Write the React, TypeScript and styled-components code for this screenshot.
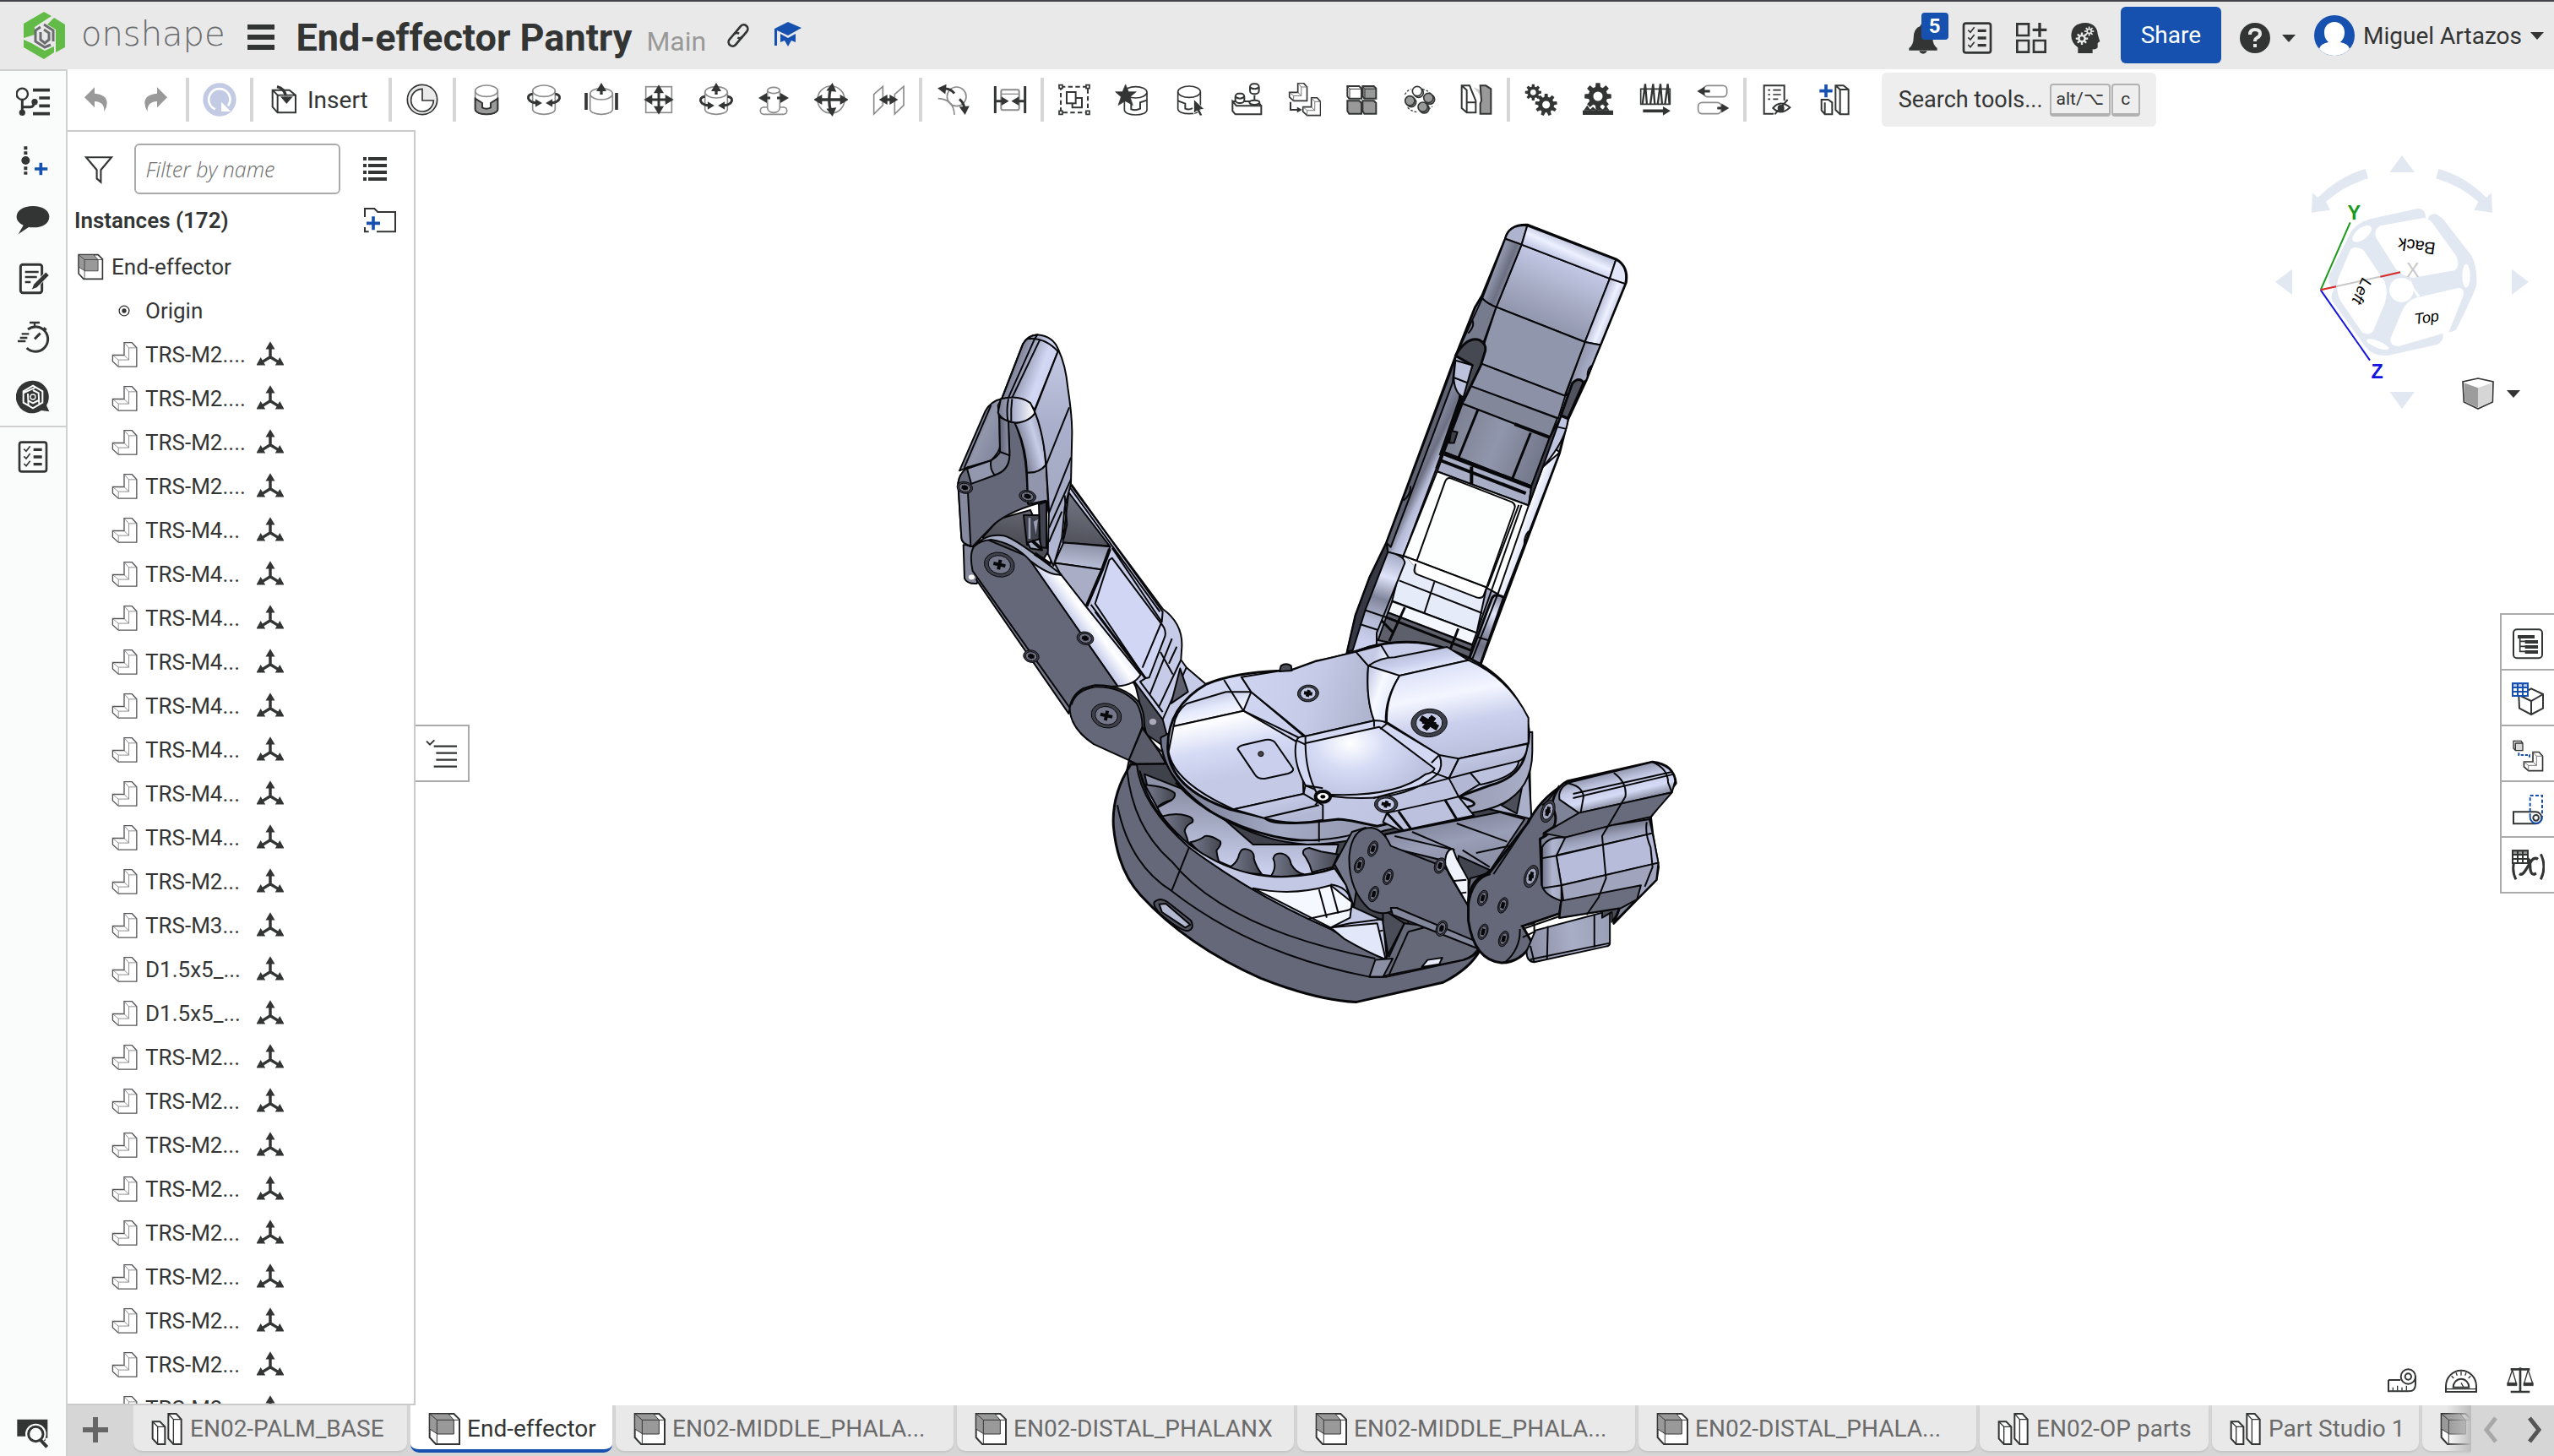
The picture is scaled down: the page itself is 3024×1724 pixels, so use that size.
import React from "react";
import styled, { createGlobalStyle } from "styled-components";

const ink = "#333534";
const mute = "#8c8c8c";
const blue = "#1651b0";
const line = "#d0d0d0";

const Global = createGlobalStyle`
  * { box-sizing: border-box; }
  html, body { margin: 0; }
  body { font-family: Roboto, "Liberation Sans", sans-serif; color: ${ink}; background: #fff; overflow: hidden; }
  button { font: inherit; color: inherit; border: 0; background: none; padding: 0; cursor: pointer; }
  svg { display: block; }
`;

/* ---------- layout ---------- */
const Page = styled.div`
  height: 100vh; display: flex; flex-direction: column; border-top: 2px solid #444347;
`;
const Header = styled.header`
  display: flex; align-items: center; justify-content: space-between; height: 80px; flex: none;
  background: #e9e9e9; padding: 0 12px 0 28px;
`;
const HeaderSide = styled.div<{ $gap: number }>`
  display: flex; align-items: center; gap: ${(p) => p.$gap}px;
`;
const Brand = styled.a`
  display: flex; align-items: center; gap: 18px; color: #6b6c6e; text-decoration: none;
  font: 200 40px/48px "DejaVu Sans", sans-serif;
`;
const BrandName = styled.span`padding-bottom: 4px;`;
const TitleRow = styled.div`
  display: flex; align-items: baseline; gap: 17px; padding-top: 6px;
`;
const Title = styled.h1`margin: 0; font-size: 45px; line-height: 52px; font-weight: 700;`;
const Branch = styled.span`font-size: 32px; color: #999;`;
const DocLinks = styled.div`display: flex; align-items: center; gap: 22px; margin-left: -7px;`;
const IconButton = styled.button<{ $w?: number }>`
  width: ${(p) => p.$w ?? 40}px; height: 40px; flex: none; display: flex; align-items: center; justify-content: center;
  position: relative;
`;
const Badge = styled.span`
  position: absolute; left: 18px; top: -10px; width: 32px; height: 32px; border-radius: 4px; background: ${blue};
  color: #fff; font-size: 24px; line-height: 32px; font-weight: 700; text-align: center;
`;
const StatusIcons = styled.div`display: flex; align-items: center; gap: 24px; padding-top: 6px;`;
const Share = styled.button`
  height: 67px; padding: 0 24px; border-radius: 6px; background: ${blue}; color: #fff; font-size: 28px; margin-top: -2px;
`;
const User = styled.button`display: flex; align-items: center; gap: 10px; font-size: 28px;`;
const Caret = styled.span`
  border: 8px solid transparent; border-top: 9px solid ${ink}; border-bottom: 0; flex: none;
`;
const HelpButton = styled.button`display: flex; align-items: center; gap: 14px; padding-top: 6px;`;

const Body = styled.div`flex: 1; min-height: 0; display: flex;`;
const Rail = styled.nav`
  width: 80px; flex: none; border-right: 2px solid ${line}; border-top: 2px solid ${line}; background: #fafcfb;
  display: flex; flex-direction: column; align-items: center; gap: 30px; padding: 16px 0 8px;
`;
const RailRule = styled.hr`width: 100%; height: 2px; border: 0; margin: -16px 0 -15px; background: ${line};`;
const RailSpace = styled.div`flex: 1;`;
const Main = styled.main`flex: 1; min-width: 0; display: flex; flex-direction: column;`;
const Toolbar = styled.div`
  height: 72px; flex: none; display: flex; align-items: center; padding-left: 14px;
`;
const ToolGroup = styled.div<{ $gap?: number }>`display: flex; align-items: center; gap: ${(p) => p.$gap ?? 28}px;`;
const Divider = styled.span`width: 4px; height: 52px; background: #d6d6d6; margin: 0 16px; flex: none;`;
const InsertButton = styled.button`
  display: flex; align-items: center; gap: 8px; padding-right: 8px; font-size: 28px;
`;
const SearchTools = styled.button`
  height: 64px; margin-left: 36px; padding: 0 19px 0 20px; border-radius: 6px; background: #eee;
  display: flex; align-items: center; font-size: 27px; gap: 8px;
`;
const Keys = styled.span`display: flex; gap: 1px;`;
const Key = styled.kbd`
  font: 21px/33px Roboto, "DejaVu Sans", sans-serif; height: 39px; padding: 0 6px; min-width: 34px; text-align: center;
  border: 2px solid #b2b2b2; border-bottom-width: 4px; border-radius: 4px;
`;
const Work = styled.div`flex: 1; min-height: 0; display: flex; position: relative;`;
const Panel = styled.aside`
  width: 412px; flex: none; border: 2px solid #cacaca; border-left: 0; overflow: hidden; display: flex; flex-direction: column;
`;
const FilterRow = styled.div`
  display: flex; align-items: center; justify-content: space-between; padding: 14px 26px 0 17px; flex: none;
`;
const FilterInput = styled.input`
  width: 244px; height: 60px; border: 2px solid #aaa; border-radius: 6px; padding: 0 12px;
  font: italic 300 25px/32px "Open Sans", sans-serif; color: ${ink};
  &::placeholder { color: #6d6d6d; opacity: 1; }
`;
const InstancesRow = styled.div`
  display: flex; align-items: center; justify-content: space-between; padding: 2px 20px 0 8px; height: 60px; flex: none;
`;
const InstancesTitle = styled.h2`margin: 0; font-size: 26px; font-weight: 600; line-height: 32px;`;
const Tree = styled.ul`list-style: none; margin: 0; padding: 0;`;
const TreeRow = styled.li<{ $indent: number }>`
  height: 52px; display: flex; align-items: center; gap: 9px; padding-left: ${(p) => p.$indent}px; font-size: 26px;
`;
const PartName = styled.span`width: 123px; white-space: nowrap;`;

const Canvas = styled.section`flex: 1; min-width: 0; position: relative; overflow: hidden;`;
const Model = styled.svg`position: absolute; left: 628px; top: 96px;`;
const CubeArea = styled.div`position: absolute; right: 0; top: 6px;`;
const ViewMenu = styled.button`
  position: absolute; right: 40px; top: 290px; height: 44px; display: flex; align-items: center; gap: 14px;
`;
const Flyout = styled.button`
  position: absolute; left: -2px; top: 704px; width: 66px; height: 68px; border: 2px solid #aaa; border-left-color: #fff; background: #fff;
  display: flex; align-items: center; justify-content: center; padding-top: 2px;
`;
const SideTools = styled.div`
  position: absolute; right: 0; top: 572px; width: 64px; border: 2px solid #aaa; border-right: 0; background: #fff;
  display: flex; flex-direction: column;
`;
const SideTool = styled.button`
  height: 66px; display: flex; align-items: center; justify-content: center; border-bottom: 2px solid #aaa;
  padding-top: 4px;
  &:last-child { border-bottom: 0; height: 64px; }
`;
const Measure = styled.div`position: absolute; right: 20px; bottom: 10px; display: flex; gap: 30px;`;

const TabBar = styled.nav`
  height: 60px; flex: none; display: flex; align-items: flex-start; background: #d6d6d6; overflow: hidden;
`;
const TabStrip = styled.div`flex: 1; min-width: 0; display: flex; gap: 4px; overflow: hidden; height: 60px; position: relative;`;
const AddTab = styled.button`width: 78px; height: 58px; flex: none; display: flex; align-items: center; justify-content: center; padding-right: 12px;`;
const Tab = styled.button<{ $active?: boolean; $w: number }>`
  width: ${(p) => p.$w}px; flex: none; height: ${(p) => (p.$active ? 56 : 54)}px; display: flex; align-items: center; gap: 7px;
  padding: ${(p) => (p.$active ? 4 : 2)}px 12px 0 20px; border-radius: 0 0 10px 10px; font-size: 28px; white-space: nowrap;
  text-align: left; line-height: 34px;
  color: ${(p) => (p.$active ? ink : "#6b6b6b")}; background: ${(p) => (p.$active ? "#fff" : "#e9e9e9")};
  box-shadow: ${(p) => (p.$active ? "none" : "0 2px 2px #c6c6c6")};
  border-bottom: ${(p) => (p.$active ? `4px solid ${blue}` : "0")};
`;
const Fade = styled.span`
  position: absolute; right: 0; top: 0; width: 30px; height: 54px; background: linear-gradient(90deg, transparent, #bdbdbd);
`;
const TabNav = styled.div`width: 98px; height: 58px; display: flex; align-items: center; justify-content: space-between; padding: 0 14px;`;

/* ---------- icon helpers (units are a third of a pixel) ---------- */
const Glyph = ({ children, s = 40 }: { children: React.ReactNode; s?: number }) => (
  <svg width={s} height={s} viewBox="-60 -60 120 120" fill="none" stroke={ink} strokeWidth="6" aria-hidden="true">{children}</svg>
);
const Head = ({ x, y, r = 0, k = 1 }: { x: number; y: number; r?: number; k?: number }) => (
  <path transform={`translate(${x} ${y}) rotate(${r}) scale(${k})`} d="M0 -22L18 8H-18Z" fill={ink} stroke="none" />
);
const Cyl = ({ t = -31, b = 34, w = 40, c = mute }: { t?: number; b?: number; w?: number; c?: string }) => (
  <g stroke={c} strokeWidth="5" fill="#fff">
    <path d={`M${-w} ${t}V${b}C${-w} ${b + 24} ${w} ${b + 24} ${w} ${b}V${t}`} />
    <ellipse cx="0" cy={t} rx={w} ry={w / 2} />
  </g>
);
const gearPath = (teeth: number, r: number, h: number) => {
  const pts: string[] = [];
  for (let i = 0; i < teeth; i++) {
    [[-0.34, r], [-0.2, r + h], [0.2, r + h], [0.34, r]].forEach(([o, q]) => {
      const a = ((i + o) / teeth) * Math.PI * 2;
      pts.push(`${(Math.sin(a) * q).toFixed(1)} ${(-Math.cos(a) * q).toFixed(1)}`);
    });
  }
  return `M${pts.join("L")}Z`;
};
const Gear = ({ x, y, r, n = 8 }: { x: number; y: number; r: number; n?: number }) => (
  <g transform={`translate(${x} ${y})`} stroke="none">
    <path d={`${gearPath(n, r * 0.74, r * 0.3)}M${r * 0.36} 0A${r * 0.36} ${r * 0.36} 0 1 0 ${-r * 0.36} 0A${r * 0.36} ${r * 0.36} 0 1 0 ${r * 0.36} 0Z`} fill={ink} fillRule="evenodd" />
  </g>
);
const SpinArrows = ({ dy = 0 }: { dy?: number }) => (
  <g transform={`translate(0 ${dy})`}>
    <path d="M-40 -20Q-58 -18 -55 -4Q-50 10 -24 12M40 -20Q58 -18 55 -4Q50 10 24 12" strokeWidth="9" />
    <Head x={-24} y={12} r={90} k={0.8} /><Head x={24} y={12} r={-90} k={0.8} />
  </g>
);
const Ell = ({ x, y, k, f = "#fff" }: { x: number; y: number; k: number; f?: string }) => (
  <g transform={`translate(${x} ${y}) scale(${k})`} strokeWidth={5 / k}>
    <path d="M0 -48L30 -48L48 -28V44H-22L-44 24V0H0Z" fill={f} />
    <path d="M0 -48L18 -28V18H-22L-44 0M18 -28H48M0 0L18 18M-22 18V44" strokeWidth={3 / k} stroke="#777" />
  </g>
);
const DarkCube = ({ s = 40 }: { s?: number }) => (
  <Glyph s={s}>
    <path d="M-52 -54H34L54 -34V54H-30L-52 30Z" fill="#fff" />
    <path d="M-52 -54H14L34 -32V18H-24L-52 0Z" fill="#999" strokeWidth="3" />
    <path d="M-52 -54L-26 -32H34M-26 -32V18M-26 18V54M34 -32H54" strokeWidth="3" />
  </Glyph>
);
const StudioIcon = () => (
  <Glyph>
    <path d="M-52 -26H-26L-8 -8V54H-34L-52 34ZM4 -54H32L50 -34V54H22L4 34Z" fill="#fff" />
    <path d="M-52 -26L-34 -8V54M-34 -8H-8M4 -54L22 -34V54M22 -34H50" strokeWidth="4" />
  </Glyph>
);
const PartIcon = () => <Glyph s={32}><g stroke="#55565a"><Ell x={0} y={2} k={1.16} /></g></Glyph>;
const MateIcon = () => (
  <Glyph s={32}>
    <path d="M0 -40V10L-42 36M0 10L42 36" strokeWidth="13" />
    <Head x={0} y={-34} k={1.15} /><Head x={-40} y={34} r={-120} k={1.15} /><Head x={40} y={34} r={120} k={1.15} />
  </Glyph>
);
const Checklist = () => (
  <Glyph>
    <rect x="-48" y="-52" width="96" height="104" rx="8" strokeWidth="8" />
    <path d="M2 -26H32M2 0H32M2 26H32" strokeWidth="10" />
    <path d="M-32 -28L-24 -20L-10 -38M-32 -2L-24 6L-10 -12M-32 24L-24 32L-10 14" strokeWidth="5" />
  </Glyph>
);

const tools: Record<string, React.ReactNode> = {
  Clock: <><circle r="53" fill="#eaeaea" strokeWidth="5" /><path d="M0 -38V3H40A40 40 0 1 1 0 -38Z" fill="#fff" strokeWidth="5" /></>,
  Fastened: <><Cyl /><path d="M-40 -4L-15 12V28Q0 36 15 28V12L40 -4V34C40 58 -40 58 -40 34Z" fill="#999" /></>,
  Revolute: <><Cyl /><SpinArrows /></>,
  Slider: <><Cyl t={-20} b={34} /><path d="M-54 -24V36M54 -24V36" strokeWidth="11" /><path d="M0 -18V-40" strokeWidth="10" /><Head x={0} y={-38} /></>,
  Planar: <><rect x="-46" y="-46" width="92" height="92" stroke={mute} strokeWidth="5" /><path d="M-40 0H40M0 -40V40" strokeWidth="9" /><Head x={0} y={-31} /><Head x={0} y={31} r={180} /><Head x={-31} y={0} r={-90} /><Head x={31} y={0} r={90} /></>,
  Cylindrical: <><Cyl t={-26} /><SpinArrows dy={9} /><path d="M0 -18V-40" strokeWidth="10" /><Head x={0} y={-38} /></>,
  "Pin slot": <><rect x="-47" y="27" width="94" height="25" rx="12" stroke={mute} strokeWidth="5" /><Cyl t={-33} b={28} w={22} /><path d="M-12 -6H-40M12 -6H40" strokeWidth="9" /><Head x={-32} y={-6} r={-90} /><Head x={32} y={-6} r={90} /></>,
  Ball: <><circle r="48" stroke={mute} strokeWidth="5" /><path d="M-44 0H44M0 -44Q-14 0 0 44" strokeWidth="10" /><Head x={2} y={-38} r={8} /><Head x={2} y={38} r={172} /><Head x={-40} y={0} r={-90} /><Head x={40} y={0} r={90} /></>,
  Parallel: <><path d="M-52 -19L-20 -47V20L-52 51ZM22 -19L54 -47V20L22 51Z" stroke={mute} strokeWidth="5" /><path d="M-20 0H20" strokeWidth="10" /><Head x={-12} y={0} r={-90} /><Head x={12} y={0} r={90} /></>,
  Tangent: <><circle cx="14" cy="-11" r="34" stroke={mute} strokeWidth="5" /><path d="M-52 -4Q4 -2 6 54" stroke={mute} strokeWidth="5" /><path d="M6 -22Q-10 -42 -34 -38M24 -2Q40 12 42 32" strokeWidth="9" /><Head x={-32} y={-38} r={-84} /><Head x={42} y={32} r={175} /></>,
  Width: <><path d="M-53 -48V48M53 -48V48" strokeWidth="9" /><rect x="-32" y="-35" width="64" height="72" rx="6" stroke={mute} strokeWidth="6" /><path d="M-32 -20H32" stroke={mute} strokeWidth="4" /><path d="M-50 5H-24M50 5H24" strokeWidth="9" /><Head x={-24} y={5} r={90} k={0.9} /><Head x={24} y={5} r={-90} k={0.9} /></>,
  Group: <><rect x="-48" y="-46" width="96" height="92" strokeDasharray="16 10" /><path d="M-54 -52h12v12h-12zM42 -52h12v12h-12zM-54 40h12v12h-12zM42 40h12v12h-12z" fill="#fff" strokeWidth="5" /><rect x="-27" y="-27" width="32" height="40" /><path d="M5 -6H27V28H-7V13" /></>,
  "Mate connector": <><g transform="translate(14 0)"><Cyl t={-26} b={36} c={ink} /><path d="M-40 2Q-20 10 -16 14V34Q0 40 16 32V10L40 2" /></g><path d="M-22 -54L-11 -28L16 -28L-6 -10L4 20L-22 4L-48 20L-38 -10L-58 -28L-33 -28Z" fill={ink} strokeWidth="2" /></>,
  Select: <><Cyl t={-28} b={32} c={ink} /><path d="M-40 4L-14 14V32Q0 38 12 30" /><path d="M16 -2L54 34L38 36L48 56L38 58L28 40L16 50Z" fill={ink} stroke="#fff" strokeWidth="3" /></>,
  Replicate: <><path d="M-50 6L-36 22H52V52H-40L-50 40ZM-50 6H40L52 22" /><rect x="-40" y="-22" width="32" height="34" rx="12" fill="#fff" /><path d="M-40 -10Q-24 2 -8 -10" /><rect x="12" y="-56" width="32" height="36" rx="12" fill="#fff" /><path d="M12 -44Q28 -32 44 -44M28 -16V6" /><ellipse cx="28" cy="10" rx="18" ry="8" fill="#fff" /></>,
  "Move part": <><Ell x={-22} y={-26} k={0.68} /><Ell x={26} y={26} k={0.68} /><path d="M-48 8V36H-22" /><Head x={-20} y={36} r={90} k={0.6} /></>,
  Pattern: <><g fill="#999"><path d="M-50 -48H-8L0 -40V-4H-44L-50 -12Z" fill="#fff" /><path d="M4 -48H44L52 -40V-4H10L4 -12ZM-50 4H-8L0 12V50H-44L-50 40ZM4 4H44L52 12V50H10L4 40Z" /></g><path d="M-50 -48L-42 -38H0M-42 -38V-4M4 -48L12 -38H52M12 -38V-4" strokeWidth="3" /></>,
  "Circular pattern": <>{[[-6, -30, "#fff"], [34, -6, "#999"], [14, 26, "#999"], [-32, 4, "#999"]].map(([x, y, f]) => <g key={`${x}`} fill={f as string} strokeWidth="5"><circle cx={(x as number) + 5} cy={(y as number) + 5} r="17" /><circle cx={x as number} cy={y as number} r="17" /></g>)}<path d="M12 -38Q40 -30 48 -12M-50 -18Q-40 -34 -28 -38M-40 28Q-26 42 -8 44M34 34L48 24" strokeDasharray="8 6" strokeWidth="4" /></>,
  Mirror: <><path d="M-10 -44L30 4V-48L46 -20Z" fill="#ccc" stroke="none" /><path d="M-52 -50H-24L-2 4V46H-34L-52 30ZM-52 -50L-34 -34V46M-34 -34V10H-4" fill="#fff" /><path d="M14 -50H34L52 -38V50H14V14L18 4Z" fill="#999" /></>,
  Gears: <><Gear x={-26} y={-26} r={28} /><Gear x={20} y={18} r={38} n={9} /></>,
  "Rack and pinion": <><Gear x={0} y={-12} r={46} n={8} /><path d="M-52 40H52V52H-52ZM-48 38L-38 24L-28 38L-18 28L-6 38L6 28L18 38L28 24L38 38" fill={ink} strokeWidth="4" /></>,
  Screw: <><path d="M-52 -38H52V16H-52Z" strokeWidth="5" /><path d="M-46 18L-36 -56L-30 18M-18 18L-8 -56L-2 18M8 18L18 -56L24 18M34 18L44 -56L50 18" strokeWidth="7" /><path d="M-44 40H30" strokeWidth="11" /><Head x={34} y={40} r={90} k={0.9} /></>,
  Linear: <><rect x="-32" y="-50" width="82" height="40" rx="14" stroke={mute} strokeWidth="5" /><rect x="-52" y="10" width="82" height="40" rx="14" stroke={mute} strokeWidth="5" /><path d="M-10 -30H-34M16 30H40" strokeWidth="9" /><Head x={-36} y={-30} r={-90} k={0.9} /><Head x={38} y={30} r={90} k={0.9} /></>,
  "Bill of materials": <><path d="M26 4V-50H-46V50H-12" /><path d="M-32 -34H-24M-14 -34H14M-32 -18H-24M-14 -18H14M-32 -2H-24M-14 -2H4" strokeWidth="5" /><path d="M-14 30Q12 -2 46 28Q14 58 -14 30ZM-8 52L38 0" /><circle cx="14" cy="30" r="9" fill={ink} /></>,
  "Insert studio": <><path d="M4 -50H32L50 -36V52H20L4 36ZM4 -50L20 -36V52M20 -36H50M-46 0H-22L-8 10V52H-34L-46 38ZM-34 10V52" strokeWidth="6" /><path d="M-30 -54V-8M-53 -31H-7" stroke={blue} strokeWidth="11" /></>,
};
const groups: string[][] = [
  ["Clock"],
  ["Fastened", "Revolute", "Slider", "Planar", "Cylindrical", "Pin slot", "Ball", "Parallel"],
  ["Tangent", "Width"],
  ["Group", "Mate connector", "Select", "Replicate", "Move part", "Pattern", "Circular pattern", "Mirror"],
  ["Gears", "Rack and pinion", "Screw", "Linear"],
  ["Bill of materials", "Insert studio"],
];

const railIcons: [string, React.ReactNode][] = [
  ["Versions", <><circle cx="-38" cy="-26" r="20" strokeWidth="7" /><path d="M-38 -6V42M-38 20H-8Q4 18 4 2" strokeWidth="9" /><circle cx="-38" cy="40" r="11" fill={ink} stroke="none" /><circle cx="6" cy="2" r="11" fill={ink} stroke="none" /><path d="M0 -40H60M22 -12H60M22 16H60M0 44H60" strokeWidth="11" /></>],
  ["History", <><path d="M-26 -50V50" strokeDasharray="12 6" strokeWidth="12" /><circle cx="-26" cy="0" r="18" fill={ink} stroke="#fafcfb" /><path d="M28 8V52M6 30H52" stroke={blue} strokeWidth="11" /></>],
  ["Comments", <path d="M0 -48C36 -48 58 -32 58 -10C58 14 34 28 4 28C-4 28 -10 28 -14 26L-52 52L-34 20C-50 12 -58 2 -58 -10C-58 -32 -36 -48 0 -48Z" fill={ink} stroke="none" />],
  ["Notes", <><rect x="-44" y="-50" width="76" height="100" rx="8" strokeWidth="9" /><path d="M-28 -24H20M-28 -6H14M-28 12H-8" strokeWidth="8" /><path d="M46 -24L58 -12L14 32L-6 40L2 20Z" fill={ink} stroke="#fafcfb" strokeWidth="3" /></>],
  ["Timing", <><path d="M-18 -30A44 44 0 1 1 -22 36" strokeWidth="9" /><path d="M6 -42V-54M-12 -54H24M38 -36L48 -28M-40 -14H-14M-46 0H-20M-54 12H-26" strokeWidth="7" /><path d="M6 4L26 -16" strokeWidth="9" /></>],
  ["Assistant", <><path d="M0 -58A58 58 0 1 0 30 48L58 52L48 30A58 58 0 0 0 0 -58Z" fill={ink} stroke="none" /><path d="M0 -40L34 -20V20L0 40L-34 20V-20ZM-34 -14L10 -34M-16 30L-18 -12M22 24L20 -14L0 -24M-18 12L0 22L20 12" stroke="#fff" strokeWidth="6" /><circle r="9" fill={ink} stroke="#fff" strokeWidth="4" /></>],
];

const sideIcons: [string, React.ReactNode][] = [
  ["Structure", <><rect x="-51" y="-50" width="102" height="102" rx="12" /><path d="M-36 -24H24M-10 -6H36M-10 12H36M-10 30H36" strokeWidth="12" /><path d="M-28 -20V28H-8M-28 -8H-8M-28 10H-8" strokeWidth="5" /></>],
  ["Table", <><path d="M-32 -12L12 -38L54 -18V32L12 54L-30 32ZM-30 -14L12 6L54 -18M12 6V54" fill="#fff" /><path d="M-54 -56H0V-12H-54Z" fill="#fff" stroke={blue} /><path d="M-54 -56H0V-42H-54Z" fill="#c6cfea" stroke={blue} /><path d="M-54 -27H0M-36 -56V-12M-18 -56V-12" stroke={blue} /></>],
  ["Named positions", <><path d="M-51 -50H-24L-18 -42V-16H-44L-51 -24ZM-44 -42H-18M-44 -42V-16" fill="#d9d9d9" strokeWidth="4" /><path d="M-32 -8V0H6V8" stroke={blue} strokeDasharray="10 5" /><Ell x={18} y={24} k={0.72} /></>],
  ["Display states", <><path d="M8 46H-51V4H28A21 21 0 1 1 28 46Z" /><circle cx="29" cy="25" r="10" /><path d="M8 22V-54H51V22" stroke={blue} strokeDasharray="12 7" /><path d="M8 22A21 22 0 0 0 51 22" stroke={blue} /></>],
  ["Variables", <><path d="M-48 -20Q-58 16 -42 46M46 -44Q68 0 46 46" strokeWidth="9" /><path d="M-30 26Q-20 32 -10 16L14 -22Q24 -34 36 -26M-4 -28Q8 -28 8 -4Q8 28 22 28L30 24" strokeWidth="10" /><path d="M-54 -56H0V-12H-54Z" fill="#fff" /><path d="M-54 -56H0V-42H-54Z" fill="#999" /><path d="M-54 -27H0M-36 -56V-12M-18 -56V-12" /></>],
];

const names = [
  ...Array(4).fill("TRS-M2...."), ...Array(8).fill("TRS-M4..."), "TRS-M2...", "TRS-M3...", "D1.5x5_...", "D1.5x5_...",
  ...Array(9).fill("TRS-M2..."),
];
const tabs: [string, "part" | "asm", number, boolean?][] = [
  ["EN02-PALM_BASE", "part", 324], ["End-effector", "asm", 239, true], ["EN02-MIDDLE_PHALA...", "asm", 400],
  ["EN02-DISTAL_PHALANX", "asm", 399], ["EN02-MIDDLE_PHALA...", "asm", 400], ["EN02-DISTAL_PHALA...", "asm", 400],
  ["EN02-OP parts", "part", 271], ["Part Studio 1", "part", 245], ["", "asm", 120],
];

/* ---------- 3D model ---------- */
const P = ({ d, f = "none", w = 2 }: { d: string; f?: string; w?: number }) => (
  <path d={d} fill={f} strokeWidth={w} vectorEffect="non-scaling-stroke" />
);
const ScrewHead = ({ x, y, a, b, f = "#6e7182" }: { x: number; y: number; a: number; b: number; f?: string }) => (
  <g transform={`translate(${x} ${y}) rotate(12)`}>
    <ellipse rx={a} ry={b} fill="#3d3f49" vectorEffect="non-scaling-stroke" />
    <ellipse rx={a * 0.74} ry={b * 0.74} fill={f} vectorEffect="non-scaling-stroke" />
    <path d={`M${-a * 0.4} 0H${a * 0.4}M0 ${-b * 0.4}V${b * 0.4}`} strokeWidth="4" vectorEffect="non-scaling-stroke" />
  </g>
);
const Grad = ({ id, v, s }: { id: string; v: [number, number, number, number]; s: string[] }) => (
  <linearGradient id={id} gradientUnits="userSpaceOnUse" x1={v[0]} y1={v[1]} x2={v[2]} y2={v[3]}>
    {s.map((c, i) => <stop key={i} offset={i / (s.length - 1)} stopColor={c} />)}
  </linearGradient>
);
const D = "#656878";

const LeftFinger = () => (
  <g transform="translate(1110 380) scale(.3333 .3444)">
    <P d="M470 560L800 990Q872 1040 868 1120L865 1165L885 1192L955 1250L890 1300L830 1480L700 1250L530 985L400 840L440 640Z" f="#c6cce8" />
    <P d="M466 590L612 774L445 762Z" f="url(#a1)" />
    <P d="M476 562L800 1000L797 1035L620 780M470 572L790 1000" />
    <P d="M448 762L614 776L585 855L415 832Z" f="url(#a2)" />
    <P d="M415 832L585 855L527 985L440 876Z" f="#a9aec6" />
    <P d="M612 784L584 858L530 980" w={4} />
    <P d="M620 815L790 1035Q815 1060 808 1085L752 1226L738 1228L560 972L610 822Z" f="#d0d6f3" />
    <P d="M545 975L740 1228L720 1240L800 1345M795 1038L728 1192M833 1092L755 1282M850 1120L822 1178M792 1138L836 1215M865 1165L785 1330M885 1190L800 1370M560 1000L735 1226" />
    <P d="M862 1195L890 1275L830 1315Z" f="#5d5f6d" />
    <P d="M700 1240L800 1370L830 1480L740 1420L715 1300Z" f="#4a4c57" />
    <ellipse cx="765" cy="1378" rx="14" ry="12" fill="#aab" />
    <P d="M325 820L442 876L530 985L722 1216Q700 1252 640 1256Z" f="url(#a3)" />
    <P d="M92 770L96 885Q105 905 140 903L150 860L130 770Z" f="#83879a" />
    <ellipse cx="121" cy="881" rx="12" ry="10" fill="#fff" />
    <P d="M138 890L466 1350L472 1325L150 860Z" f="#777b8c" />
    <P d="M125 860Q112 800 130 775Q170 740 230 745L290 770L330 825L640 1256L520 1262Q478 1285 470 1330Z" f={D} />
    <P d="M160 745L220 680L330 650L395 790L370 830Z" f="url(#a1)" />
    <P d="M130 775Q170 730 235 738Q275 745 440 872Q400 878 330 825Q270 762 190 752Q150 755 130 775" f="#a8adc6" />
    <P d="M228 268Q190 275 170 310L78 515L108 503L190 480Q222 450 222 430L220 345L215 290Z" f="url(#a4)" />
    <P d="M190 290L95 505" />
    <P d="M108 503L200 520Q255 500 256 450L250 345L275 350Q310 430 316 525L322 628L385 620Q260 650 200 700L125 775L115 775Q85 765 85 745L73 560Q75 525 108 503Z" f={D} />
    <P d="M73 555L108 590L118 774Q85 765 85 745Z" f="#858a9f" />
    <P d="M105 508L190 480L205 530L120 560Z" f="#9398af" />
    <P d="M190 480Q215 465 224 448L256 462Q255 515 203 530Q185 510 190 480Z" f="#7b7f92" />
    <P d="M220 330L252 345L256 462L222 450Z" f="url(#a5)" />
    <P d="M303 80Q320 48 355 47Q412 52 430 100L345 305Q310 258 228 268Z" f="url(#a6)" />
    <P d="M228 268L303 80Q320 50 355 47L345 62L250 268M262 270L365 62M320 62Q380 55 428 105" />
    <P d="M225 268Q290 252 330 282L347 315Q330 352 280 350Q228 345 215 315Z" f="url(#a7)" />
    <P d="M252 268Q244 305 250 345M265 268Q260 305 262 345" />
    <P d="M275 352Q330 345 347 315Q378 385 385 495Q360 525 318 522Q315 430 275 352Z" f="url(#a8)" />
    <P d="M318 522Q360 525 386 495L395 660L386 618L322 630Z" f="#9196ad" />
    <P d="M430 100Q455 150 463 230Q479 330 478 390L474 560L452 640L442 745L412 842L392 800L396 650L386 495Q375 380 345 310Z" f="url(#a9)" />
    <P d="M468 297L386 495M474 470L396 660M474 545L396 712M396 760L442 655M452 600L460 700L448 750" />
    <P d="M360 630L387 622V780L365 778ZM306 668H362V758L318 770Z" f="#41434e" />
    <path d="M322 676H332V750H322ZM340 690L358 680L350 740Z" fill="#9a9fb6" />
    <P d="M320 762L362 750L372 788L330 782Z" f="#a8adc6" />
    <P d="M335 755L370 785M345 800L400 835" w={4} />
    <P d="M470 1330Q480 1265 560 1252Q660 1250 715 1310Q735 1340 735 1390Q740 1440 790 1485L860 1600L680 1510L555 1455Q470 1400 470 1330Z" f={D} />
    <P d="M476 1320Q490 1270 560 1258Q655 1256 708 1315Q728 1350 728 1395L680 1510M728 1395Q760 1450 795 1480" />
    <P d="M728 1400L790 1485L850 1590L680 1510Z" f="#5a5c69" />
    <P d="M680 1512L668 1568H740V1540Z" f="#4b4d58" />
    <ScrewHead x={97} y={573} a={28} b={20} /><ScrewHead x={320} y={603} a={30} b={20} />
    <ScrewHead x={525} y={1091} a={30} b={22} /><ScrewHead x={333} y={1153} a={28} b={21} />
    <ScrewHead x={220} y={838} a={54} b={42} f="#74788a" /><ScrewHead x={600} y={1357} a={54} b={42} f="#74788a" />
  </g>
);

const BackFinger = () => (
  <g transform="translate(1580 250) scale(.3333 .3444)">
    <P d="M607 95Q620 45 685 47L1000 165Q1045 190 1036 245L945 460L915 530L895 580L830 715L800 830L515 1568L40 1540L75 1390L125 1260L185 1140L430 500L500 330L525 290Z" f="#a7acc5" w={3} />
    <P d="M665 115L978 232L890 450L575 330Z" f="url(#b1)" />
    <P d="M607 95Q620 45 685 50L665 115Z" f="#aeb4ce" />
    <P d="M685 50L1000 167L978 232L665 115Z" f="url(#b2)" />
    <P d="M1000 167Q1045 190 1033 250L978 232Z" f="#e2e7fa" />
    <P d="M607 95L665 115L575 330Q545 320 525 300Z" f="url(#b3)" />
    <P d="M525 300Q545 320 575 330L530 450L430 500Z" f="#777b8e" />
    <P d="M978 232L1033 250L945 460L890 450Z" f="url(#b4)" />
    <P d="M890 450L945 460L895 580L820 635Z" f="url(#b5)" />
    <P d="M575 330L890 450L818 635L510 520Z" f="#9096ac" />
    <P d="M510 520L820 635L795 712L480 600Z" f="#8c91a7" />
    <P d="M480 600L792 712L765 778L455 662Z" f="#828799" />
    <P d="M430 550L460 640L360 890L245 1185L190 1172L185 1140Z" f="url(#b6)" />
    <P d="M430 500L410 560L185 1140L200 1155L420 590Z" f="#5e616f" />
    <P d="M455 662L765 778L700 945L390 828Z" f="url(#b7)" />
    <P d="M510 682L440 850M697 762L633 918M455 645L362 885M447 640L375 840" w={3} />
    <P d="M415 755L437 760L425 797H408Z" f="#3d3f49" />
    <P d="M390 828L700 945L690 1012L365 895Z" f="#a9aec7" />
    <P d="M390 835L705 952M380 858L680 970M487 878V940M640 732L765 778" w={4} />
    <P d="M365 895L690 1012L740 880L765 800L800 830L602 1328L540 1295L245 1185Z" f="#fdfefe" />
    <P d="M740 880L800 830L602 1328L580 1318L690 1012Z" f="url(#b8)" />
    <P d="M412 918L630 1000Q645 1008 640 1022L530 1322Q522 1334 505 1328L292 1248Q278 1240 285 1222L393 930Q400 915 412 918Z" />
    <P d="M665 1010L505 1450M655 1010L545 1290" />
    <P d="M245 1185L540 1295L505 1450L205 1340Z" f="#e6ebfa" />
    <path d="M256 1190L540 1295L528 1326L505 1328L292 1248L285 1222Z" fill="#fff" />
    <P d="M245 1185L545 1295M289 1212L285 1228Q280 1242 292 1248L505 1328Q522 1334 530 1322L541 1292" />
    <P d="M230 1270L525 1382M355 1275L320 1380M205 1342L505 1450" />
    <P d="M205 1342L505 1450L490 1490L190 1380Z" f="#f5f7ff" />
    <P d="M190 1380L490 1492L480 1540L155 1475Z" f="#5d5f6a" />
    <P d="M250 1362L195 1478M440 1435L410 1510M165 1405L210 1450M180 1395L485 1510" w={3} />
    <P d="M190 1172Q250 1185 250 1210L150 1450L150 1490L50 1520L75 1410L125 1260Z" f="url(#b9)" />
    <P d="M185 1140L125 1260L75 1390L45 1515L65 1510L110 1370L190 1172Z" f="#363843" />
    <P d="M110 1372L180 1395M90 1420L155 1440" />
    <P d="M602 1328Q570 1312 560 1330L480 1535L515 1568Z" f="url(#b10)" w={3} />
    <P d="M578 1322L490 1540M510 1465L545 1475" />
    <P d="M430 497Q470 430 515 443Q540 455 536 480L520 530L460 650L445 640L490 530Z" f="#464852" w={3} />
    <P d="M430 513L490 530L458 640Q425 625 424 570ZM424 572L472 590" f="#bcc2dc" />
    <P d="M845 592Q870 568 885 590L830 712L805 702Z" f="#50525d" w={3} />
    <P d="M805 705L830 715Q822 790 740 880L765 790ZM785 740L820 748" f="#bfc5e0" />
    <P d="M765 778L700 945L690 1012L740 880L805 705Z" f="#3b3d47" />
    <P d="M490 375Q500 395 475 420M270 945Q272 975 245 995M690 1100Q672 1120 675 1150M915 530Q895 545 900 575" />
  </g>
);

const gaps: [string, string][] = [
  ["M122 568Q180 575 198 598Q200 612 190 622Q165 630 152 650Q128 610 122 568Z", "M152 650L190 622"],
  ["M165 680Q200 665 230 678Q248 685 244 700Q222 715 224 735Q230 755 234 780Q195 740 165 680Z", ""],
  ["M238 772Q262 765 276 750Q290 745 315 768Q320 780 306 800Q306 815 314 850Q270 825 238 772Z", ""],
  ["M338 862Q360 845 364 815Q370 790 385 797Q405 805 402 830Q408 860 422 885Q378 885 338 862Z", ""],
  ["M446 892Q462 860 452 830Q455 808 475 812Q495 820 498 850Q510 880 530 885Q490 898 446 892Z", ""],
  ["M552 878Q545 840 530 815Q525 795 545 792L575 805L620 815L605 860Z", ""],
];

const Palm = () => (
  <g transform="translate(1300 740) scale(.4592 .3333)">
    <P d="M85 495Q35 600 40 715Q50 870 110 960Q230 1140 420 1255Q560 1332 665 1340L890 1270Q960 1220 985 1155L1115 680L1112 480Z" f={D} w={3} />
    <P d="M100 495Q110 640 235 790Q400 960 600 1080Q690 1160 745 1190L800 1180L800 800L1110 650V480Z" f="#3f414b" />
    <P d="M960 640L1110 500L1118 690L1060 670Z" f="#aab0ca" /><P d="M1040 640Q1090 600 1100 530L1080 670Z" f="#4c4e5a" />
    <P d="M120 530L250 600L400 780L620 780L605 865Q540 895 450 892Q340 880 240 780Q140 680 120 530Z" f="url(#c1)" />
    {gaps.map(([d, e]) => <React.Fragment key={d}><P d={d} f="url(#c2)" />{e && <P d={e} />}</React.Fragment>)}
    <P d="M165 680Q150 640 118 560L108 520Q130 660 235 790Q400 960 600 1080Q680 1150 745 1190L735 1050L655 1000L640 925L610 865Q550 895 455 895Q340 885 240 785Q200 740 165 680Z" f="#c3c9e4" />
    <P d="M400 935Q500 965 600 925L655 985L650 1040L600 1075Z" f="#f6f8ff" />
    <P d="M570 940L590 1040M600 925L620 1025M540 1045L640 1015Q660 1010 655 985Q645 930 600 922M600 1075L650 1060L735 1045M635 1115L735 1085" />
    <P d="M600 1075L720 1060L742 1188Q690 1160 635 1115Z" f="#e2e7f9" />
    <P d="M735 1010L790 1060L750 1185L735 1060Z" f="#4b4d59" />
    <P d="M75 515Q90 720 190 840Q330 1080 715 1185M50 640Q80 850 190 945Q400 1170 700 1250M235 790L190 945" />
    <P d="M790 1060L850 1070L985 1140Q970 1180 940 1190L725 1250L745 1180Z" f="#666978" />
    <P d="M715 1190L760 1185L735 1250L700 1250Z" f="#8a8fa4" />
    <P d="M790 1060L750 1180M800 1090L750 1245M700 1250H745L945 1190Q975 1175 985 1150M800 1090L850 1072" />
    <P d="M835 1215L850 1190L888 1182L880 1205Z" f="#e8ecfa" />
    <P d="M145 985Q160 965 180 985L240 1050Q250 1080 232 1087Q210 1085 160 1025Q142 1000 145 985Z" f="#4f515d" />
    <P d="M158 992L175 990L238 1065L225 1075L165 1020Z" f="#b2b8d0" />

    <P d="M162 400Q160 540 300 670Q420 770 540 780Q640 780 740 730L990 660Q1120 620 1120 450V380L900 400L300 300Z" f="url(#c3)" />
    <P d="M200 560Q300 720 500 765Q620 770 700 725M165 440Q190 600 330 690Q450 770 570 765" />
    <P d="M180 440Q178 290 280 210Q350 170 470 163L500 160L560 130Q640 110 700 78Q810 40 900 85Q1040 150 1095 300Q1122 380 1105 440Q1095 540 1010 570L930 610Q1010 640 930 650L720 715Q640 690 620 690Q450 720 430 685L340 655Q185 580 180 440Z" f="url(#c4)" w={3} />
    <P d="M228 280L330 238L395 238L375 305L195 360Q200 310 228 280Z" f="url(#c5)" />
    <P d="M195 360L375 305L525 425L530 600L350 655Q195 560 182 450Z" f="url(#c6)" />
    <P d="M350 655L530 600L580 640V692Q500 715 425 685Z" f="url(#c7)" />
    <P d="M325 195L375 305L525 405M370 185L395 238L535 400M430 685L570 640" />
    <P d="M370 185L470 163L500 160L560 130L665 95L697 145Q690 260 712 340L535 395L395 238Z" f="url(#c8)" />
    <P d="M665 95L730 72L778 180Q740 260 742 345L712 340Q690 260 697 145Z" f="url(#c9)" />
    <P d="M697 145Q730 115 765 115L900 78L955 125L778 180Z" f="url(#c12)" />
    <P d="M778 180L955 125Q1060 190 1110 330V420L930 475L880 462L745 345Q742 260 778 180Z" f="url(#c10)" />
    <P d="M930 475L1108 422Q1105 480 1080 485L960 525L985 565L930 610L905 545Z" f="url(#c7)" />
    <P d="M512 410Q515 395 535 395L712 340Q735 338 745 350L880 462Q892 500 875 530Q780 640 600 608L535 570Q500 480 512 410Z" f="#d3d9f2" />
    <P d="M535 420L725 362L868 510Q865 525 845 530Q760 620 565 600Q535 520 535 420Z" f="url(#c11)" />
    <P d="M512 410L535 425M535 395V420M712 340V362M745 350L728 370M880 462L860 490M875 530L860 520M530 600L535 570L580 580M875 530L905 545L930 475M580 608L560 640M710 615L905 545" />
    <P d="M570 692V770M960 525L905 545M1085 485Q1080 540 985 568" />
    <P d="M360 440Q362 430 378 425L432 408Q450 405 458 420L503 510Q505 522 490 528L430 546Q412 548 404 530Z" f="#c9cfec" />
    <ellipse cx="420" cy="458" rx="7" ry="9" fill="#444" vectorEffect="non-scaling-stroke" />
    <P d="M468 165L472 145Q485 132 498 145L500 162Z" f="#4b4d58" />
    <ScrewHead x={542} y={243} a={27} b={30} f="#c4cae6" />
    <ScrewHead x={854} y={348} a={46} b={50} f="#c4cae6" />
    <path d="M832 330L876 366M866 326L842 370" strokeWidth="7" vectorEffect="non-scaling-stroke" />
    <circle cx="580" cy="610" r="19" fill="#fff" strokeWidth="4" vectorEffect="non-scaling-stroke" /><circle cx="580" cy="610" r="6" fill="#000" />
    <ScrewHead x={743} y={637} a={30} b={30} f="#c4cae6" />
  </g>
);

const RightFinger = () => (
  <g transform="translate(1300 740) scale(.4592 .3333)">
    <P d="M610 850L655 735L690 720L660 1000L640 925Z" f="#73778a" />
    <P d="M735 700L745 668L900 620L930 610L970 678L790 738Z" f="#bcc2de" />
    <P d="M745 668L790 735M775 662L810 730M895 622L925 690M740 745L970 678" w={3} />
    <P d="M740 745L1035 665L1100 690L1010 875L940 830L885 835L750 790Z" f="url(#d1)" />
    <P d="M810 735L920 800M925 705L1055 770M975 810L1060 785M940 800L1010 860M765 750L920 800" />
    <P d="M930 820L1010 870L1000 885L960 900L950 990L925 900Z" f="#42444f" />
    <P d="M895 850Q895 798 915 795L925 830L955 905V1000L905 880Z" f="#f0f3fc" />
    <P d="M912 910L950 905M925 955L950 950" />
    <P d="M648 820Q655 720 705 720Q735 725 755 785L875 850Q900 860 905 885L955 1000L980 1145L770 1005Q740 1040 700 1010Q645 940 648 820Z" f={D} />
    <P d="M755 1005L770 1005L985 1130L980 1150L760 1030Z" f="#83879b" />
    <P d="M955 980Q960 900 1010 880L1110 700Q1140 620 1195 572L1260 640L1150 740L1150 930L1195 980L1190 1025L1095 1070L1120 1130Q1090 1200 1040 1200Q970 1190 955 1050Z" f={D} w={3} />
    <P d="M1105 1160L1128 1085L1320 1015V1130Q1320 1140 1310 1142L1125 1198Q1105 1195 1105 1160Z" f="url(#d2)" />
    <P d="M1160 1070L1158 1185M1280 1030V1145M1115 1140L1125 1198M1115 1188L1320 1130M1095 1080L1190 1035L1340 1000" />
    <P d="M1300 1015L1350 1005L1325 1055V1020L1300 1040Z" f="#4b4d59" />
    <P d="M1210 555L1430 487Q1485 495 1490 562L1425 682L1430 740L1445 860L1440 905L1390 975L1330 1060L1345 1005L1190 1040L1195 980L1145 925L1140 760Q1200 720 1170 640Q1180 575 1210 555Z" f="#7f8397" w={3} />
    <P d="M1215 560L1430 487Q1485 500 1488 555L1480 595L1240 668L1190 620Q1185 580 1215 560Z" f="url(#d3)" />
    <P d="M1240 668L1480 595L1425 682L1330 710L1205 755L1150 740Z" f="#686b7b" />
    <P d="M1205 755L1330 710L1422 690L1430 740L1182 818L1145 790Z" f="url(#d4)" />
    <P d="M1182 820L1430 740L1445 845L1195 925Z" f="#b6bcd9" />
    <P d="M1195 925L1445 845L1440 905L1390 975L1340 945L1200 980Z" f="#a0a5bd" />
    <P d="M1195 980L1400 925L1390 975L1350 1005L1190 1040Z" f="#6b6e7e" />
    <P d="M1145 790Q1160 750 1205 755L1182 820L1195 925V980Q1150 960 1145 925Z" f="url(#d5)" />
    <P d="M1140 830L1182 820M1145 935L1195 925M1205 560Q1250 570 1252 610L1245 665M1225 615L1485 530M1225 600L1480 522M1330 525Q1365 560 1360 610L1300 750L1310 900L1290 970L1260 1030M1430 487Q1470 510 1470 560L1480 595M1415 700Q1410 740 1425 790L1430 860L1410 930" />
    <P d="M1190 570Q1160 630 1145 640M1110 700L1020 885M955 1000Q965 900 1012 885M1090 1070L1125 1060V1090L1095 1110M1088 1080Q1090 1150 1050 1198" />
    {[[709, 795], [674, 853], [748, 895], [711, 956], [992, 970], [1044, 996], [993, 1090], [1046, 1115]].map(([x, y]) => (
      <ScrewHead key={`${x}-${y}`} x={x} y={y} a={12} b={28} />
    ))}
    <ScrewHead x={882} y={855} a={14} b={28} /><ScrewHead x={886} y={1078} a={14} b={28} />
    <ScrewHead x={1160} y={662} a={17} b={40} f="#a0a5bd" /><ScrewHead x={1117} y={893} a={17} b={40} f="#a0a5bd" />
  </g>
);

const HandModel = () => (
  <Model width="900" height="950" viewBox="1120 250 900 950" stroke="#08080a" strokeLinejoin="round" fill="none" role="img" aria-label="End-effector model">
    <defs>
      <Grad id="a1" v={[500, 620, 480, 780]} s={["#6f7280", "#4d4e56"]} />
      <Grad id="a2" v={[450, 760, 440, 850]} s={["#8e93a8", "#c0c6de"]} />
      <Grad id="a3" v={[440, 1060, 560, 970]} s={["#8589a0", "#c9cfec", "#ffffff", "#dfe4fa"]} />
      <Grad id="a4" v={[100, 380, 210, 430]} s={["#5f6271", "#9297ac", "#8589a0"]} />
      <Grad id="a5" v={[220, 0, 256, 0]} s={["#5f6271", "#8f94aa"]} />
      <Grad id="a6" v={[250, 160, 410, 220]} s={["#6a6d7d", "#9fa4bd", "#d2d8f4", "#ccd2ee"]} />
      <Grad id="a7" v={[215, 310, 345, 310]} s={["#777b8e", "#b5bbd6", "#ffffff"]} />
      <Grad id="a8" v={[285, 440, 385, 410]} s={["#6a6d7d", "#9a9fb8", "#c7cde8", "#9da2ba"]} />
      <Grad id="a9" v={[430, 120, 420, 800]} s={["#c2c8e2", "#aab0cb", "#a5abc5", "#b2b8d3"]} />
      <Grad id="b1" v={[820, 170, 730, 390]} s={["#c3c9e6", "#a9aec7", "#9096ac"]} />
      <Grad id="b2" v={[850, 105, 820, 175]} s={["#b9bfda", "#edf1ff", "#c3c9e6"]} />
      <Grad id="b3" v={[570, 200, 640, 230]} s={["#9096ac", "#6d7082", "#9a9fb8"]} />
      <Grad id="b4" v={[930, 340, 1000, 370]} s={["#b5bbd6", "#eef1ff", "#b5bbd6"]} />
      <Grad id="b5" v={[860, 510, 930, 540]} s={["#8f94aa", "#b2b8d3"]} />
      <Grad id="b6" v={[290, 880, 370, 920]} s={["#80849a", "#6d7082", "#b5bbd6", "#c9cfec"]} />
      <Grad id="b7" v={[420, 720, 740, 850]} s={["#7c8092", "#9096ac", "#73778a"]} />
      <Grad id="b8" v={[660, 1080, 740, 1110]} s={["#ffffff", "#d8def5", "#9a9fb8"]} />
      <Grad id="b9" v={[200, 1180, 110, 1480]} s={["#a8aec8", "#dfe4fa", "#80849a", "#b5bbd6", "#c9cfec"]} />
      <Grad id="b10" v={[590, 1330, 500, 1550]} s={["#8d92a8", "#e4e9fc", "#9a9fb8", "#6d7082", "#8d92a8"]} />
      <Grad id="c1" v={[300, 600, 280, 860]} s={["#8d92a8", "#c9cfec"]} />
      <linearGradient id="c2" x1="0" y1="0" x2="1" y2="0"><stop offset="0" stopColor="#777b8e" /><stop offset="1" stopColor="#43454f" /></linearGradient>
      <Grad id="c3" v={[165, 500, 1120, 560]} s={["#70748a", "#a4aac4", "#8d92a8", "#a9aec7"]} />
      <Grad id="c4" v={[250, 200, 900, 700]} s={["#d5dbf5", "#c6cce8", "#bcc2de"]} />
      <Grad id="c5" v={[300, 240, 330, 330]} s={["#c2c8e4", "#e4e9fc", "#fbfcff"]} />
      <Grad id="c6" v={[290, 340, 370, 640]} s={["#ffffff", "#d5dbf5", "#c4cae6", "#c4cae6"]} />
      <Grad id="c7" v={[440, 610, 470, 700]} s={["#c9cfec", "#b2b8d3"]} />
      <Grad id="c8" v={[400, 200, 700, 260]} s={["#cdd3ef", "#c6cce8", "#b0b6d0"]} />
      <Grad id="c9" v={[690, 200, 770, 220]} s={["#c4cae6", "#f7f9ff", "#e4e9fc"]} />
      <Grad id="c10" v={[850, 150, 930, 460]} s={["#dbe0f7", "#f4f6ff", "#c9cfec", "#bcc2de"]} />
      <Grad id="c12" v={[830, 90, 850, 160]} s={["#b9bfda", "#c9cfec", "#e4e9fc"]} />
      <radialGradient id="c11" gradientUnits="userSpaceOnUse" cx="650" cy="420" r="210">
        <stop offset="0" stopColor="#ffffff" /><stop offset=".45" stopColor="#d5dbf5" /><stop offset="1" stopColor="#bcc2de" />
      </radialGradient>
      <Grad id="d1" v={[900, 700, 940, 840]} s={["#858aa0", "#9a9fb8", "#8d92a8"]} />
      <Grad id="d2" v={[1120, 1100, 1320, 1080]} s={["#8d92a8", "#a9aec7", "#9a9fb8"]} />
      <Grad id="d3" v={[1320, 520, 1360, 640]} s={["#8d92a8", "#c4cae6", "#d5dbf5", "#777b8e"]} />
      <Grad id="d4" v={[1300, 710, 1320, 790]} s={["#686b7b", "#9a9fb8", "#b6bcd9"]} />
      <Grad id="d5" v={[1145, 0, 1200, 0]} s={["#70748a", "#b0b6d0", "#a0a5bd"]} />
    </defs>
    <BackFinger />
    <LeftFinger />
    <Palm />
    <RightFinger />
  </Model>
);

const ViewCube = () => (
  <svg width="384" height="360" viewBox="0 0 1152 1080" aria-label="View cube">
    <g fill="#e2e8f2">
      <path d="M612 72L657 132H568ZM612 972L657 912H568ZM162 521L222 476V567ZM1062 521L1002 476V567Z" />
      <path d="M482 120L492 154Q405 180 342 237L357 266L291 275L294 204L313 222Q390 145 482 120ZM742 120L733 154Q820 180 883 237L868 266L933 275L930 204L912 222Q835 145 742 120Z" />
      <path d="M352 525L352 500L430 345Q455 310 500 298L670 260Q700 265 695 298L705 300Q705 280 730 280Q745 285 760 300L860 430Q880 470 877 530Q870 560 805 690Q790 705 772 695L758 705Q760 735 735 745L560 783Q510 785 485 755L365 590Q355 570 370 550Z" />
    </g>
    <g fill="#fff">
      <path d="M445 398Q470 400 480 415L550 520Q565 560 550 600L510 695Q495 715 470 700L395 590Q375 555 385 510L430 405Z" />
      <path d="M535 322L690 294Q710 298 720 312L805 430Q820 465 800 480L650 507Q610 500 590 475L520 365Q510 335 535 322Z" />
      <path d="M660 578L815 542Q835 545 830 570L780 695L755 705L600 750Q570 750 570 725L610 630Q625 590 660 578Z" />
      <path d="M640 508L656 545L676 570L668 576L645 540Z" />
      <ellipse cx="470" cy="350" rx="40" ry="20" transform="rotate(-38 470 350)" />
      <ellipse cx="840" cy="500" rx="14" ry="42" /><ellipse cx="525" cy="743" rx="42" ry="12" transform="rotate(22 525 743)" />
      <circle cx="610" cy="550" r="43" />
    </g>
    <g strokeWidth="6" fill="none">
      <path d="M323 550L428 310" stroke="#1a9a1a" /><path d="M323 550L498 800" stroke="#1414e0" />
      <path d="M323 550L606 487" stroke="#c8c8c8" /><path d="M323 550L378 538M535 503L606 487" stroke="#d82c2c" />
    </g>
    <g fontFamily='"Liberation Sans", sans-serif' textAnchor="middle">
      <text x="442" y="299" fontSize="70" fontWeight="700" fill="#1a9a1a">Y</text>
      <text x="650" y="503" fontSize="70" fill="#c8c8c8">X</text>
      <text x="524" y="863" fontSize="70" fontWeight="700" fill="#1414e0">Z</text>
      <text transform="translate(667 374) rotate(188)" fontSize="60">Back</text>
      <text transform="translate(702 666) rotate(-8)" fontSize="54" fontStyle="italic">Top</text>
      <text transform="translate(452 547) rotate(114)" fontSize="56" fontStyle="italic">Left</text>
    </g>
  </svg>
);

export default function App() {
  return (
    <Page>
      <Global />
      <Header>
        <HeaderSide $gap={25}>
          <Brand href="#">
            <svg width="50" height="56" viewBox="0 0 50 56" aria-hidden="true">
              <path d="M24 0L33 5L13 18V27L0 31V14ZM36 7L49 15V42L38 48V21L28 15ZM0 33L9 37L25 46L36 41V48L24 56L0 42Z" fill="#62bb46" />
              <path d="M24 13L37 21V36L25 43L13 36V21Z" fill="#e9e9e9" />
              <path d="M24 15L35 22V35M32 39L25 42L14 35V22L20 18M20 24V33L25 37L30 33V25L24 21" fill="none" stroke="#6b6c6e" strokeWidth="3" />
            </svg>
            <BrandName>onshape</BrandName>
          </Brand>
          <IconButton $w={34} aria-label="Menu">
            <svg width="34" height="36"><path d="M1 8H33M1 20H33M1 32H33" stroke={ink} strokeWidth="6" /></svg>
          </IconButton>
          <TitleRow><Title>End-effector Pantry</Title><Branch>Main</Branch></TitleRow>
          <DocLinks>
            <IconButton aria-label="Link">
              <Glyph s={36}><g transform="rotate(-50)" strokeWidth="9"><path d="M6 16H-34A16 16 0 0 1 -34 -16H-8A16 16 0 0 1 8 -2" /><path d="M-6 -16H34A16 16 0 0 1 34 16H10A16 16 0 0 1 -8 4" /></g></Glyph>
            </IconButton>
            <IconButton $w={34} aria-label="Education">
              <svg width="34" height="34" viewBox="0 0 34 34" fill={blue}><path d="M17 1L33 8L17 17L4 11V29H1V9ZM8 15L17 20L26 15V25L21 23L17 30L13 23L8 25Z" /></svg>
            </IconButton>
          </DocLinks>
        </HeaderSide>
        <HeaderSide $gap={22}>
          <StatusIcons>
            <IconButton aria-label="Notifications">
              <Glyph><path d="M0 -50Q10 -50 10 -42Q34 -34 34 0Q34 24 50 36V44H-50V36Q-34 24 -34 0Q-34 -34 -10 -42Q-10 -50 0 -50ZM-14 46H14Q10 56 0 56Q-10 56 -14 46Z" fill={ink} stroke="none" /></Glyph>
              <Badge>5</Badge>
            </IconButton>
            <IconButton aria-label="Tasks"><Checklist /></IconButton>
            <IconButton aria-label="Apps">
              <Glyph><path d="M-50 -50H-9V-9H-50ZM-50 9H-9V50H-50ZM9 9H50V50H9Z" strokeWidth="8" /><path d="M30 -54V-4M5 -29H55" strokeWidth="10" /></Glyph>
            </IconButton>
            <IconButton aria-label="Learning">
              <Glyph><path d="M0 -54C30 -54 44 -34 44 -14L52 12L44 18V34Q40 42 26 40V54H-26V34Q-50 16 -50 -10Q-48 -52 0 -54Z" fill={ink} stroke="none" /><g transform="translate(-12 2)"><path d={gearPath(8, 14, 8)} fill="#e9e9e9" stroke="none" /><circle r="7" fill={ink} stroke="none" /></g><g transform="translate(14 -24)"><path d={gearPath(8, 10, 7)} fill="#e9e9e9" stroke="none" /><circle r="5" fill={ink} stroke="none" /></g></Glyph>
            </IconButton>
          </StatusIcons>
          <Share>Share</Share>
          <HelpButton aria-label="Help">
            <svg width="36" height="36" viewBox="0 0 36 36"><circle cx="18" cy="18" r="18" fill={ink} /><path d="M12 14Q12 8 18 8Q24 8 24 13Q24 16 20 18Q18 19 18 22M18 25V29" stroke="#e9e9e9" strokeWidth="4" fill="none" /></svg>
            <Caret />
          </HelpButton>
          <User>
            <svg width="48" height="48" viewBox="0 0 48 48"><circle cx="24" cy="24" r="24" fill={blue} /><path d="M24 8C31 8 36 13 36 20C36 26 34 29 31 32Q41 34 42 40Q34 48 24 48Q14 48 6 40Q7 34 17 32C14 29 12 26 12 20C12 13 17 8 24 8Z" fill="#fff" /></svg>
            Miguel Artazos
            <Caret />
          </User>
        </HeaderSide>
      </Header>

      <Body>
        <Rail>
          {railIcons.map(([n, g]) => <IconButton key={n} aria-label={n}><Glyph>{g}</Glyph></IconButton>)}
          <RailRule />
          <IconButton aria-label="Checklist"><Checklist /></IconButton>
          <RailSpace />
          <IconButton aria-label="Search tabs">
            <Glyph><path d="M-56 -46H52V30H-56Z" fill={ink} stroke="none" /><path d="M-60 14H-16V40H-60ZM44 20H60V40H44Z" fill="#fafcfb" stroke="none" /><circle cx="10" cy="6" r="28" fill="#fafcfb" stroke="#fafcfb" strokeWidth="18" /><circle cx="10" cy="6" r="26" fill="#fafcfb" strokeWidth="9" /><path d="M28 28L50 52" strokeWidth="12" /></Glyph>
          </IconButton>
        </Rail>
        <Main>
          <Toolbar>
            <ToolGroup $gap={30}>
              <IconButton aria-label="Undo"><Glyph><path d="M-42 -8L-6 -44V-22Q38 -18 38 12Q38 28 28 42Q30 8 -6 6V28Z" fill="#999" stroke="none" /></Glyph></IconButton>
              <IconButton aria-label="Redo"><Glyph><path d="M42 -8L6 -44V-22Q-38 -18 -38 12Q-38 28 -28 42Q-30 8 6 6V28Z" fill="#999" stroke="none" /></Glyph></IconButton>
            </ToolGroup>
            <Divider />
            <IconButton aria-label="Update"><Glyph><circle r="59" fill="#c3cae4" stroke="none" /><path d="M-16 34A38 38 0 1 1 30 22" stroke="#fff" strokeWidth="8" /><path d="M6 8V42H40Z" fill="#fff" stroke="none" /></Glyph></IconButton>
            <Divider />
            <InsertButton>
              <Glyph><path d="M-40 -34H20L42 -16V46H-22L-40 26ZM-40 -34L-22 -16V46M-22 -16H42" /><path d="M-24 -46Q4 -40 8 -8" strokeWidth="10" /><path d="M-14 -12H34L10 16Z" fill={ink} stroke="#fff" strokeWidth="2" /></Glyph>
              Insert
            </InsertButton>
            {groups.map((g) => (
              <React.Fragment key={g[0]}>
                <Divider />
                <ToolGroup>{g.map((n) => <IconButton key={n} aria-label={n}><Glyph>{tools[n]}</Glyph></IconButton>)}</ToolGroup>
              </React.Fragment>
            ))}
            <SearchTools>Search tools...<Keys><Key>alt/⌥</Key><Key>c</Key></Keys></SearchTools>
          </Toolbar>

          <Work>
            <Panel>
              <FilterRow>
                <IconButton aria-label="Filter"><Glyph s={36}><path d="M-50 -46H50L8 4V52L-8 38V4Z" strokeWidth="7" /></Glyph></IconButton>
                <FilterInput aria-label="Filter by name" placeholder="Filter by name" />
                <IconButton aria-label="List view"><Glyph><path d="M-42 -36H-30M-42 -12H-30M-42 12H-30M-42 36H-30M-24 -36H42M-24 -12H42M-24 12H42M-24 36H42" strokeWidth="12" /></Glyph></IconButton>
              </FilterRow>
              <InstancesRow>
                <InstancesTitle>Instances (172)</InstancesTitle>
                <IconButton aria-label="New folder"><Glyph><path d="M-54 -12V-42H-20L-8 -30H54V40H-12M-54 24V40H-40" strokeWidth="6" /><path d="M-24 -14V34M-48 10H0" stroke={blue} strokeWidth="11" /></Glyph></IconButton>
              </InstancesRow>
              <Tree>
                <TreeRow $indent={11}><DarkCube s={32} />End-effector</TreeRow>
                <TreeRow $indent={51}><Glyph s={32}><circle r="22" strokeWidth="5" /><circle r="10" fill={ink} stroke="none" /></Glyph>Origin</TreeRow>
                {names.map((n, i) => <TreeRow key={i} $indent={51}><PartIcon /><PartName>{n}</PartName><MateIcon /></TreeRow>)}
              </Tree>
            </Panel>
            <Canvas>
              <HandModel />
              <Flyout aria-label="Mate list"><Glyph><path d="M-28 -28H54M-20 -4H54M-20 20H54M-28 44H54" strokeWidth="7" /><path d="M-54 -46L-42 -34L-26 -50" strokeWidth="6" /></Glyph></Flyout>
              <CubeArea><ViewCube /></CubeArea>
              <ViewMenu aria-label="View options">
                <svg width="40" height="40" viewBox="-60 -60 120 120"><path d="M0 -54L54 -42L52 30L0 54L-50 30L-54 -42Z" fill="#fff" stroke={ink} strokeWidth="5" /><path d="M-50 -38L0 -20V50L-47 28Z" fill="#9c9c9c" /><path d="M50 -38L0 -20V50L48 28Z" fill="#d6d6d6" /></svg>
                <Caret />
              </ViewMenu>
              <SideTools>{sideIcons.map(([n, g]) => <SideTool key={n} aria-label={n}><Glyph>{g}</Glyph></SideTool>)}</SideTools>
              <Measure>
                <IconButton aria-label="Measure"><Glyph><path d="M-48 0H-6M-48 0V40H24Q48 40 48 14V-14" strokeWidth="6" /><circle cx="22" cy="-12" r="26" /><circle cx="22" cy="-12" r="11" /><path d="M-32 26V38M-16 20V38M0 26V38M16 20V38" strokeWidth="4" /></Glyph></IconButton>
                <IconButton aria-label="Protractor"><Glyph><path d="M-54 42V22A54 56 0 0 1 54 22V42Z" /><path d="M-28 26A28 30 0 0 1 28 26Z" /><path d="M0 -30V-16M-34 -14L-26 -6M34 -14L26 -6M-18 -26L-14 -16M18 -26L14 -16M-54 32H54M0 10L8 24" strokeWidth="4" /></Glyph></IconButton>
                <IconButton aria-label="Mass properties"><Glyph><path d="M-34 -38H34M0 -44V40M-34 42H34" strokeWidth="8" /><path d="M-28 -36L-44 12M-28 -36L-14 12M28 -36L14 12M28 -36L44 12" strokeWidth="4" /><path d="M-46 10H-12V20H-46ZM12 10H46V20H12Z" fill={ink} strokeWidth="2" /></Glyph></IconButton>
              </Measure>
            </Canvas>
          </Work>

          <TabBar>
            <AddTab aria-label="Add tab"><svg width="30" height="30"><path d="M15 0V30M0 15H30" stroke="#666" strokeWidth="6" /></svg></AddTab>
            <TabStrip>
              {tabs.map(([n, k, w, on], i) => (
                <Tab key={i} $w={w} $active={on} aria-label={n || "Assembly"}>{k === "asm" ? <DarkCube /> : <StudioIcon />}{n}</Tab>
              ))}
              <Fade />
            </TabStrip>
            <TabNav>
              <IconButton $w={18} aria-label="Previous tabs"><svg width="18" height="32"><path d="M15 2L4 16L15 30" fill="none" stroke="#a8a8a8" strokeWidth="5" /></svg></IconButton>
              <IconButton $w={18} aria-label="Next tabs"><svg width="18" height="32"><path d="M3 2L14 16L3 30" fill="none" stroke="#555" strokeWidth="5" /></svg></IconButton>
            </TabNav>
          </TabBar>
        </Main>
      </Body>
    </Page>
  );
}
